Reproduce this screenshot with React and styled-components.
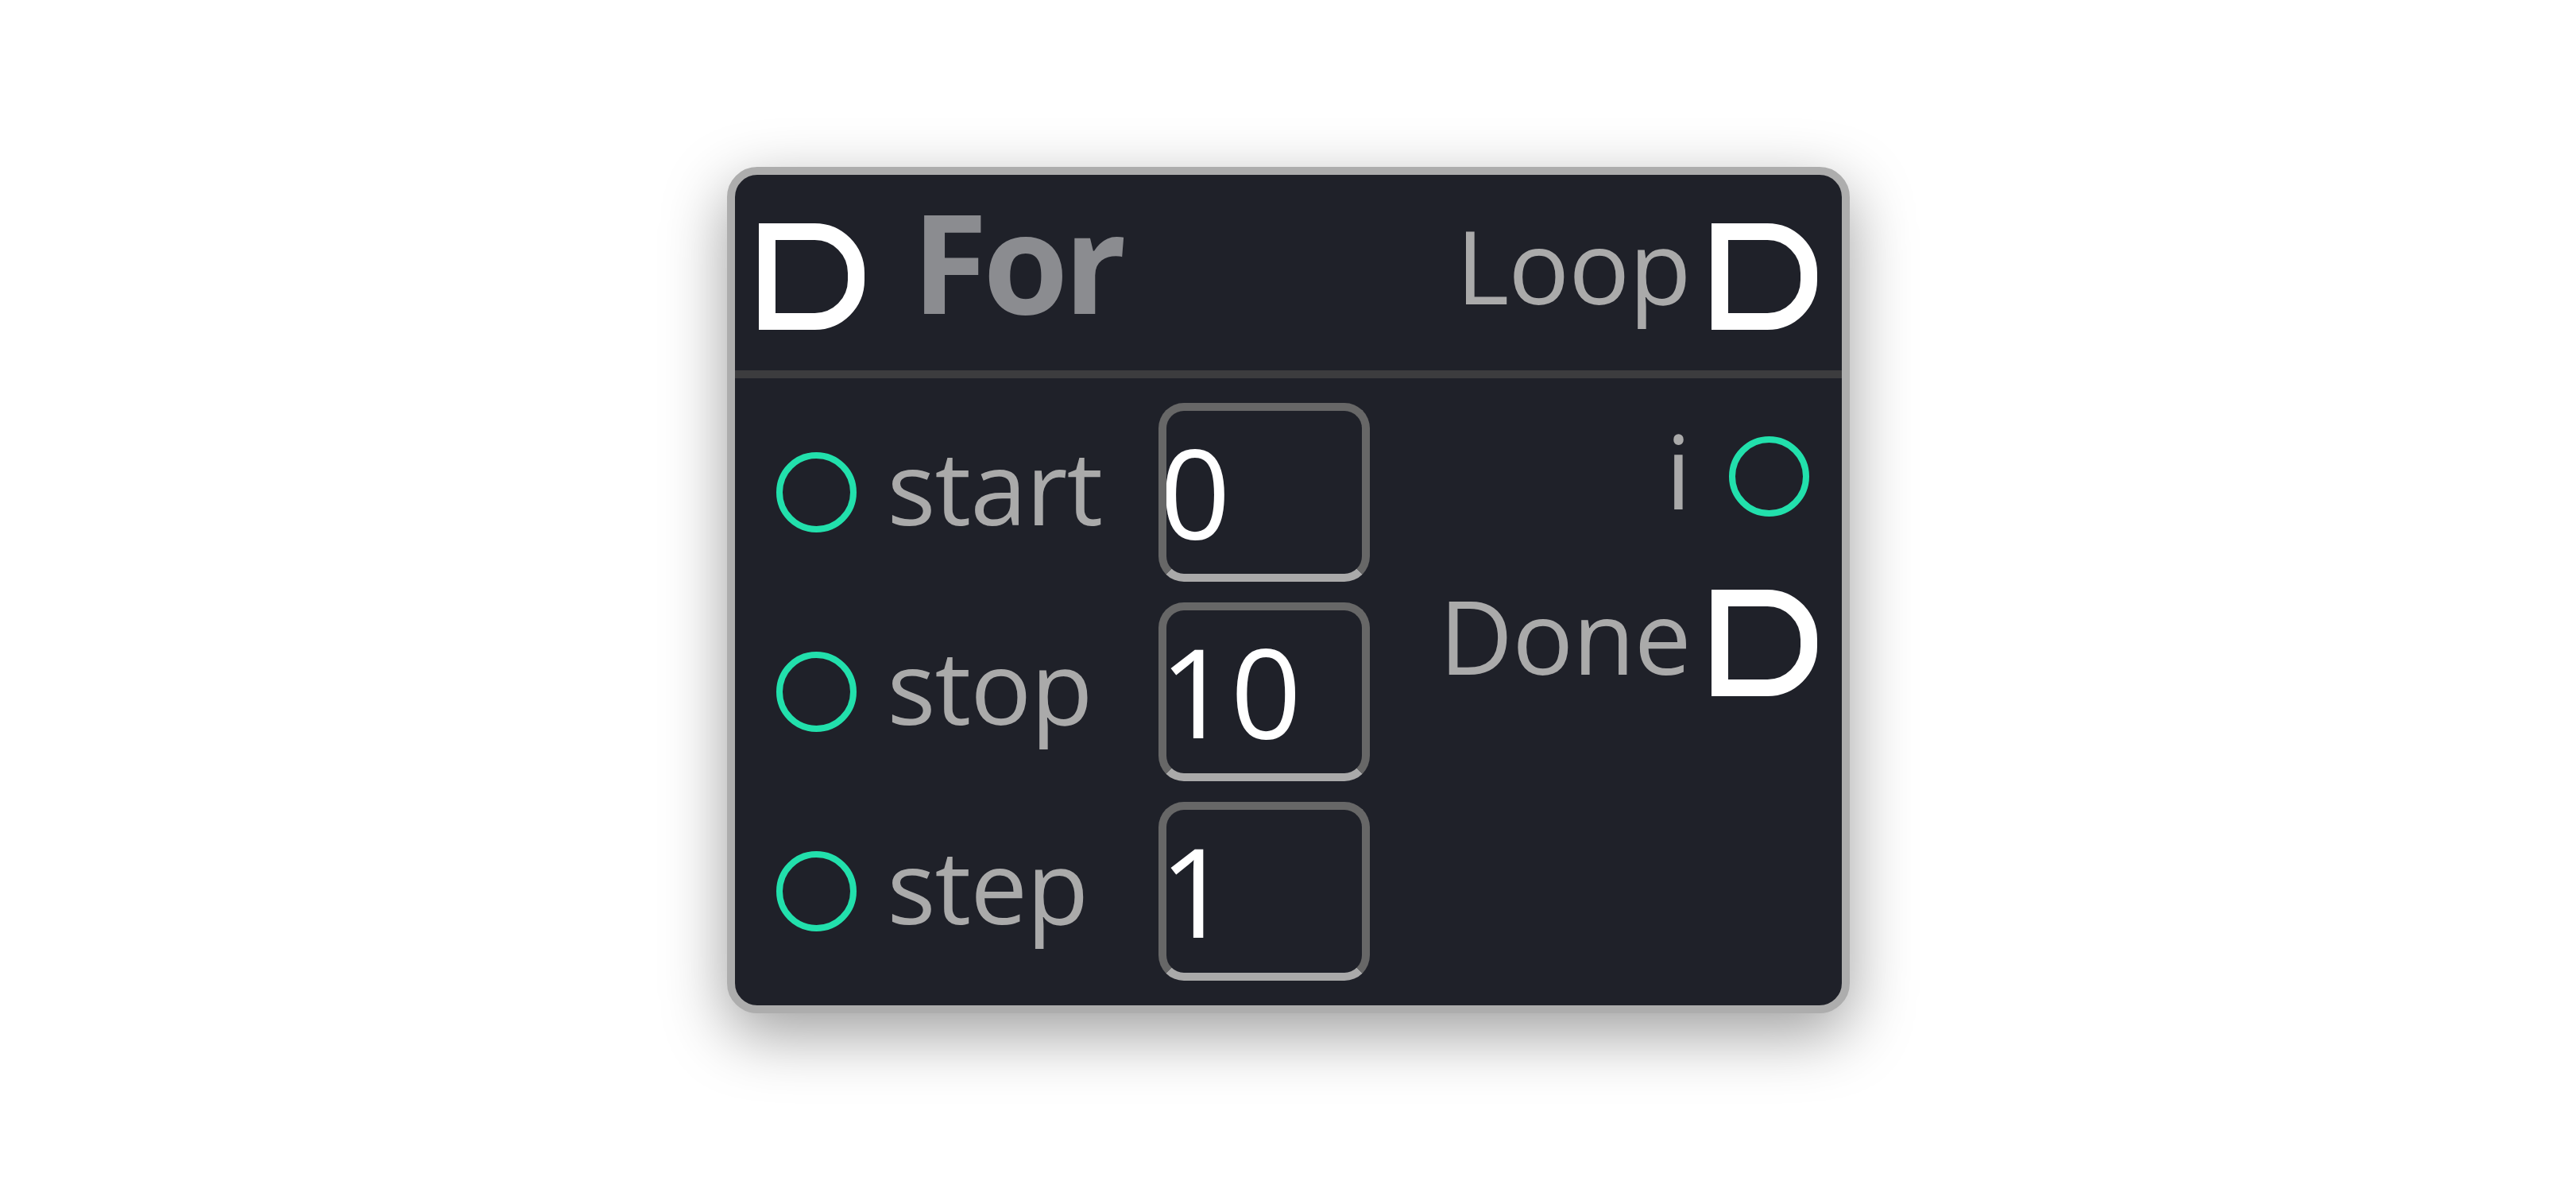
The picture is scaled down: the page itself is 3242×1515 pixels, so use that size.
import styled, { createGlobalStyle } from "styled-components";

const GlobalStyle = createGlobalStyle`
  html, body {
    margin: 0;
    background: #ffffff;
  }
  #root {
    display: flex;
    justify-content: center;
    align-items: flex-start;
    min-height: 100vh;
    box-sizing: border-box;
    padding-top: 210px;
  }
`;

const Node = styled.div`
  width: 1413px;
  box-sizing: border-box;
  border: 10px solid #adadad;
  border-radius: 38px;
  background: #1f2129;
  box-shadow: 0 26px 80px rgba(0, 0, 0, 0.38);
  overflow: hidden;
  font-family: "Open Sans", "Noto Sans", sans-serif;
`;

const Header = styled.div`
  display: flex;
  align-items: center;
  height: 246px;
  box-sizing: border-box;
  padding: 10px 31px 0 30px;
`;

const Title = styled.div`
  margin-left: 60px;
  margin-bottom: 42px;
  font-size: 174px;
  font-weight: 700;
  line-height: 1.362;
  color: #8b8c90;
  letter-spacing: -6px;
`;

const Spacer = styled.div`
  flex: 1;
`;

const Divider = styled.div`
  height: 10px;
  background: #3c3c3e;
`;

const Body = styled.div`
  display: flex;
  justify-content: space-between;
  padding: 31px 31px 31px 52px;
`;

const Column = styled.div`
  display: flex;
  flex-direction: column;
  align-items: ${(p) => (p.$right ? "flex-end" : "flex-start")};
  gap: 26px;
`;

const InRow = styled.div`
  display: flex;
  align-items: center;
  height: 225px;
`;

const OutRow = styled.div`
  display: flex;
  align-items: center;
  justify-content: flex-end;
  height: 184px;
`;

const DataPin = styled.div`
  width: 101px;
  height: 101px;
  box-sizing: border-box;
  border: 8px solid #22e0ac;
  border-radius: 50%;
  flex-shrink: 0;
  margin-right: ${(p) => (p.$right ? "10px" : "0")};
`;

const Label = styled.div`
  font-size: 128px;
  line-height: 1.362;
  color: #aaaaaa;
  margin-bottom: ${(p) => p.$lift || 0}px;
  ${(p) => (p.$width ? `width: ${p.$width}px; margin-left: 39px;` : "")}
  letter-spacing: -1px;
`;

const PinSlot = styled.div`
  width: 133px;
  margin-left: 26px;
  display: flex;
  justify-content: flex-end;
  align-items: center;
  flex-shrink: 0;
`;

const ValueInput = styled.input`
  width: 266px;
  height: 225px;
  box-sizing: border-box;
  border: 10px solid #676767;
  border-bottom-color: #aaaaaa;
  border-radius: 32px;
  background: transparent;
  color: #ffffff;
  font-family: "Open Sans", "Noto Sans", sans-serif;
  font-size: 156px;
  padding: 0 0 4px;
  text-indent: -8px;
  outline: none;
`;

const ExecPin = () => (
  <svg width="133" height="134" viewBox="0 0 133 134">
    <path
      d="M10.5 10.5 H70.5 A52 52 0 0 1 122.5 62.5 V71.5 A52 52 0 0 1 70.5 123.5 H10.5 Z"
      fill="none"
      stroke="#ffffff"
      strokeWidth="21"
      strokeLinejoin="miter"
    />
  </svg>
);

const inputs = [
  { name: "start", value: "0" },
  { name: "stop", value: "10" },
  { name: "step", value: "1" },
];

export default function App() {
  return (
    <>
      <GlobalStyle />
      <Node>
        <Header>
          <ExecPin />
          <Title>For</Title>
          <Spacer />
          <Label $lift={27}>Loop</Label>
          <PinSlot>
            <ExecPin />
          </PinSlot>
        </Header>
        <Divider />
        <Body>
          <Column>
            {inputs.map((inp) => (
              <InRow key={inp.name}>
                <DataPin />
                <Label $width={341} $lift={14}>
                  {inp.name}
                </Label>
                <ValueInput defaultValue={inp.value} />
              </InRow>
            ))}
          </Column>
          <Column $right>
            <OutRow>
              <Label $lift={14}>i</Label>
              <PinSlot>
                <DataPin $right />
              </PinSlot>
            </OutRow>
            <OutRow>
              <Label $lift={18}>Done</Label>
              <PinSlot>
                <ExecPin />
              </PinSlot>
            </OutRow>
          </Column>
        </Body>
      </Node>
    </>
  );
}
